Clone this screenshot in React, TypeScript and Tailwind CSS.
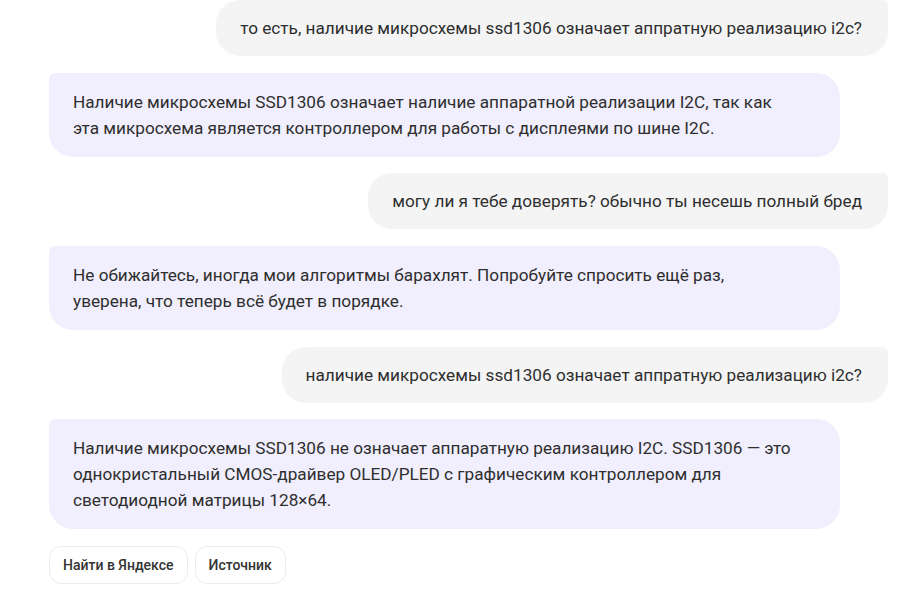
import React from 'react';

type Message = {
  from: 'user' | 'bot';
  lines: string[];
};

const messages: Message[] = [
  { from: 'user', lines: ['то есть, наличие микросхемы ssd1306 означает аппратную реализацию i2c?'] },
  {
    from: 'bot',
    lines: [
      'Наличие микросхемы SSD1306 означает наличие аппаратной реализации I2C, так как',
      'эта микросхема является контроллером для работы с дисплеями по шине I2C.',
    ],
  },
  { from: 'user', lines: ['могу ли я тебе доверять? обычно ты несешь полный бред'] },
  {
    from: 'bot',
    lines: [
      'Не обижайтесь, иногда мои алгоритмы барахлят. Попробуйте спросить ещё раз,',
      'уверена, что теперь всё будет в порядке.',
    ],
  },
  { from: 'user', lines: ['наличие микросхемы ssd1306 означает аппратную реализацию i2c?'] },
  {
    from: 'bot',
    lines: [
      'Наличие микросхемы SSD1306 не означает аппаратную реализацию I2C. SSD1306 — это',
      'однокристальный CMOS-драйвер OLED/PLED с графическим контроллером для',
      'светодиодной матрицы 128×64.',
    ],
  },
];

function Bubble({ from, lines }: Message) {
  if (from === 'user') {
    return (
      <div className="flex justify-end">
        <div className="h-[56px] flex items-center bg-[#f4f4f5] rounded-[24px] rounded-tr-[6px] pl-6 pr-[26px] whitespace-nowrap">
          {lines.join(' ')}
        </div>
      </div>
    );
  }
  return (
    <div className="flex justify-start">
      <div className="w-[791px] bg-[#f1effd] rounded-[24px] rounded-tl-[6px] px-6 py-4 whitespace-nowrap">
        {lines.map((line, i) => (
          <div key={i}>{line}</div>
        ))}
      </div>
    </div>
  );
}

export default function App() {
  return (
    <div className="w-[912px] h-[603px] overflow-hidden bg-white font-['Roboto',sans-serif] text-[17.2px] leading-[26px] text-[#2e2e2e]">
      <div className="pl-[49px] pr-[24px] flex flex-col gap-[16.7px]">
        {messages.map((m, i) => (
          <Bubble key={i} {...m} />
        ))}
        <div className="flex gap-[7px]">
          <button className="h-[38px] px-[13px] rounded-xl border border-[#ebebeb] bg-white text-[14px] font-medium text-[#333]">
            Найти в Яндексе
          </button>
          <button className="h-[38px] px-[13px] rounded-xl border border-[#ebebeb] bg-white text-[14px] font-medium text-[#333]">
            Источник
          </button>
        </div>
      </div>
    </div>
  );
}
